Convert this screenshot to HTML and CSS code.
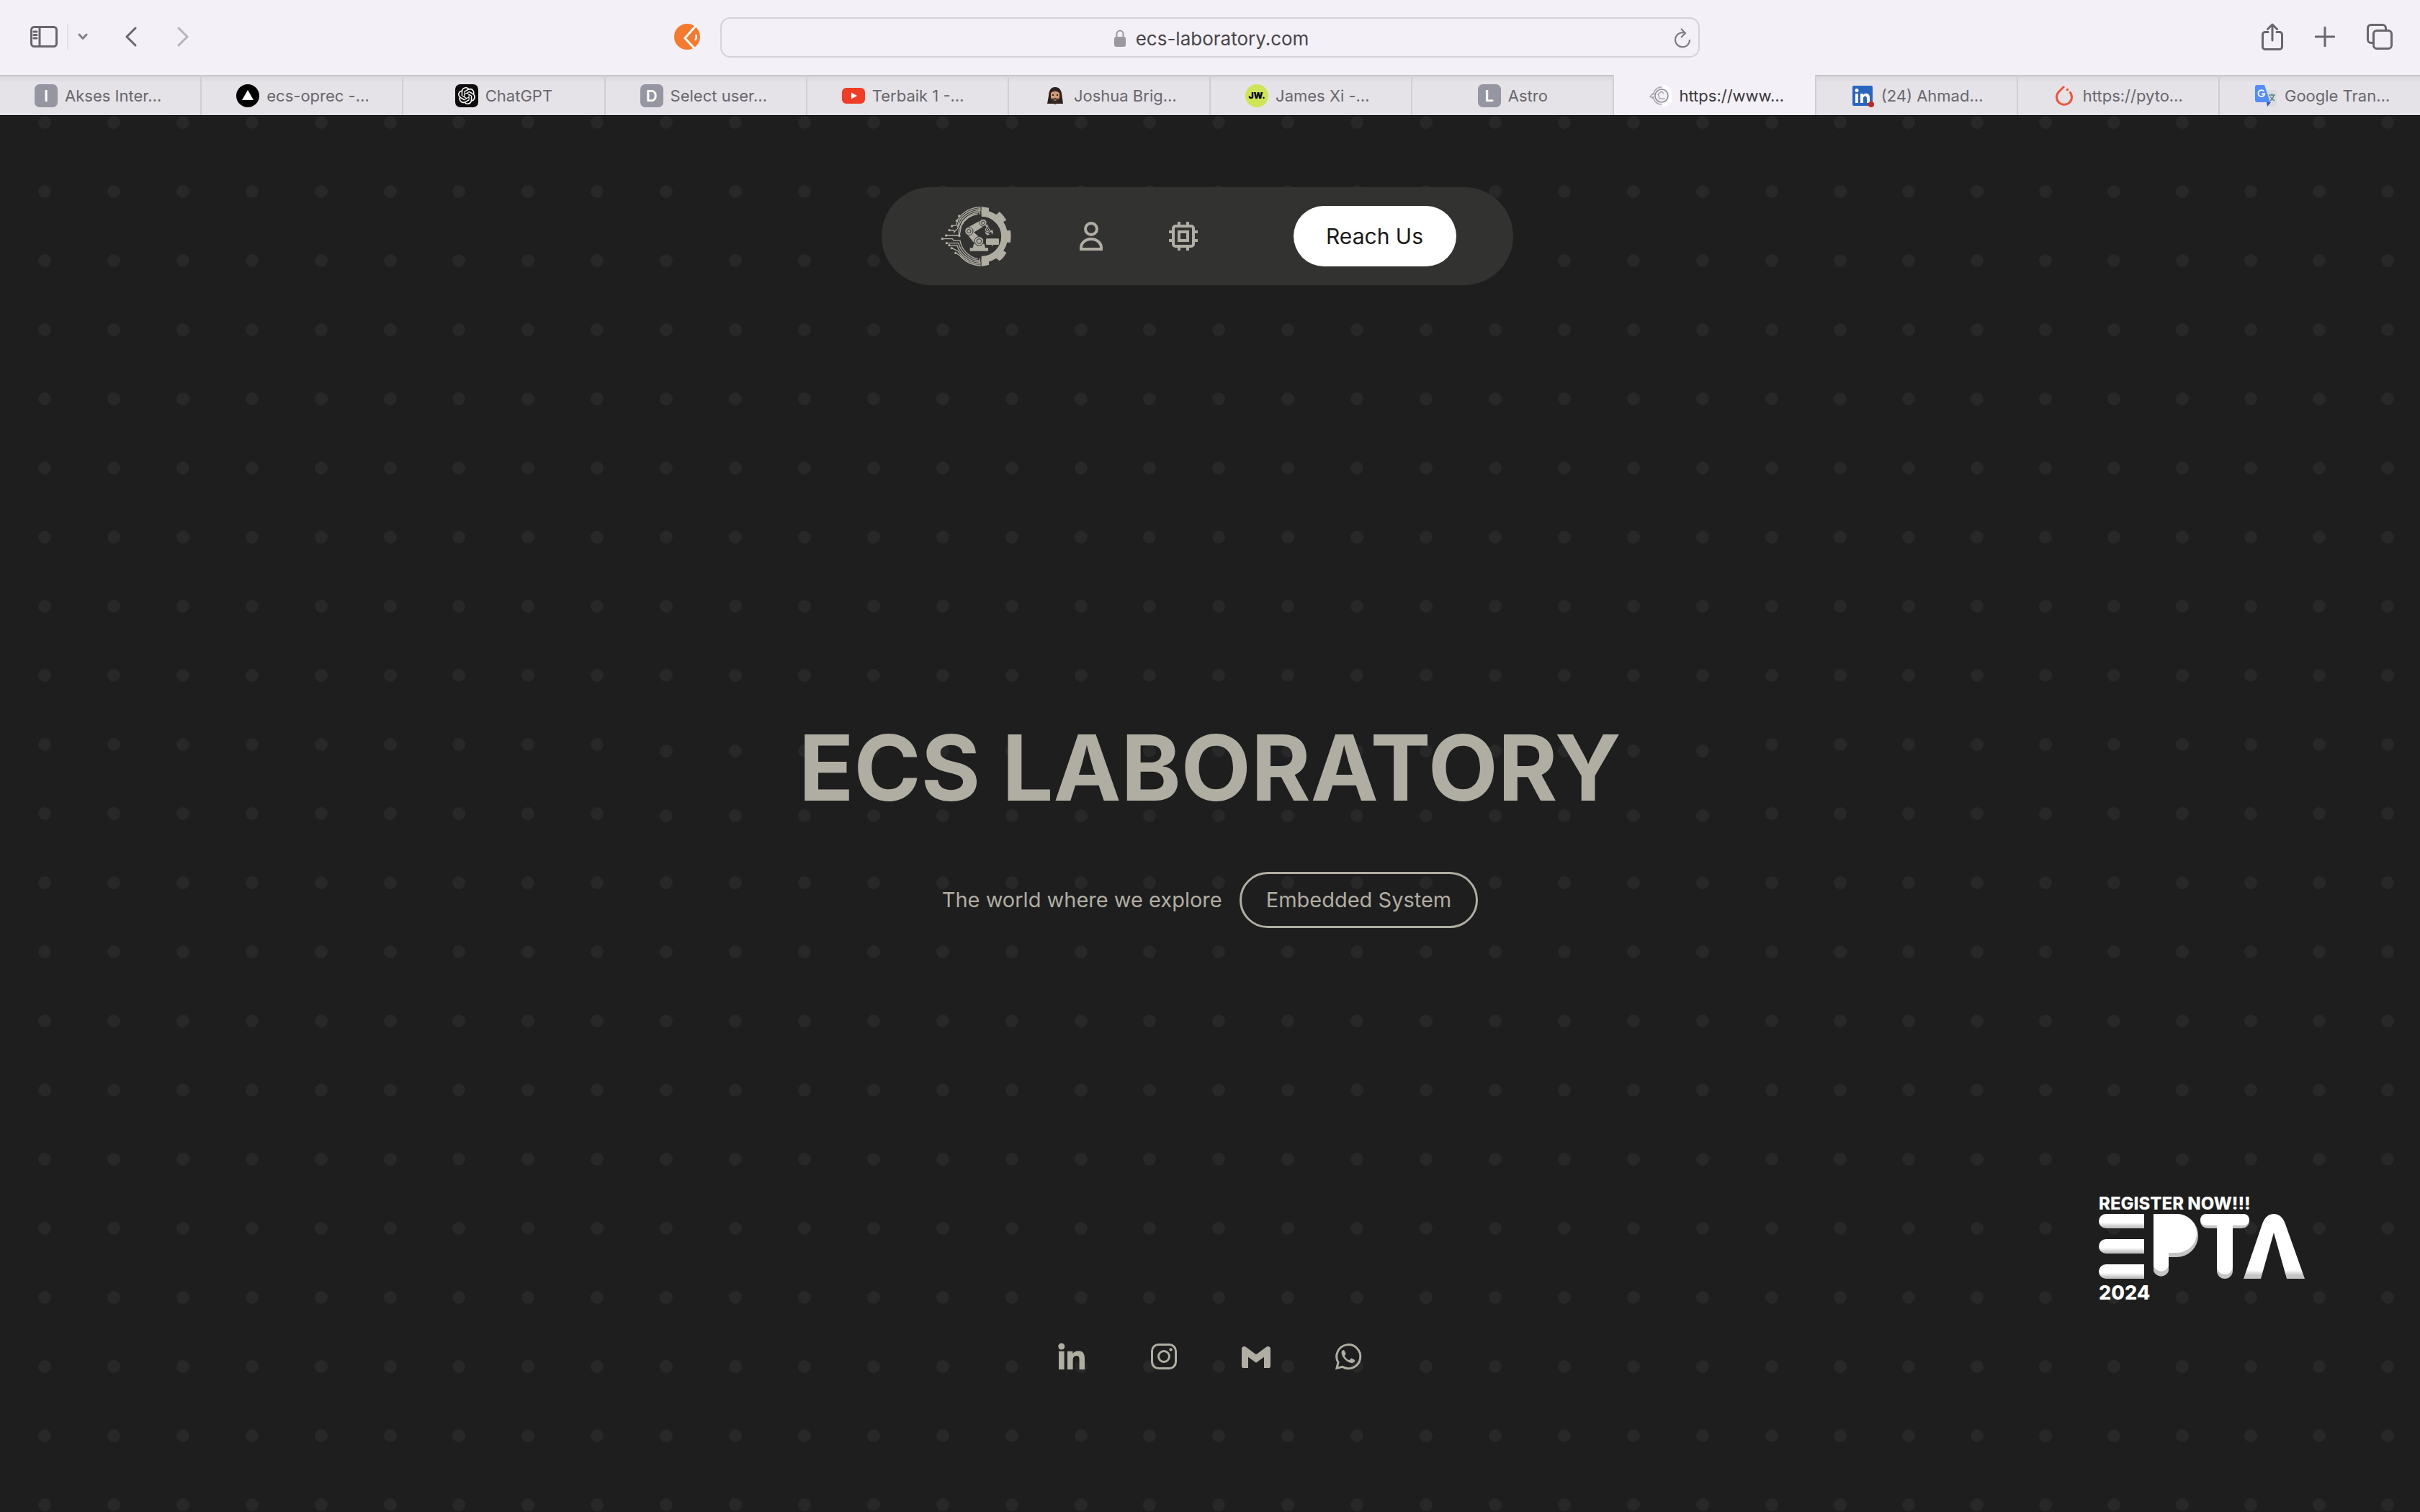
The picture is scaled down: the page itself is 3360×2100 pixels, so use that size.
FILE: index.html
```html
<!DOCTYPE html>
<html lang="en">
<head>
<meta charset="utf-8">
<meta name="viewport" content="width=device-width, initial-scale=1">
<title>ECS Laboratory</title>
<link rel="stylesheet" href="styles.css">
</head>
<body>
<div class="browser">
  <div class="toolbar">
    <div class="tools tools-left">
      <button class="tool" aria-label="Sidebar"><svg width="38" height="30" viewBox="0 0 38 30" class="line"><rect x="1.5" y="1.5" width="35" height="27" rx="4"/><path d="M13 1.5v27M5 8h4M5 12.500h4M5 17h4"/></svg></button>
      <span class="divider"></span>
      <button class="tool tool-menu" aria-label="Tab groups"><svg width="14" height="10" viewBox="0 0 14 10" class="line soft"><path d="M2 2l5 5.500L12 2"/></svg></button>
      <button class="tool tool-back" aria-label="Back"><svg width="16" height="28" viewBox="0 0 16 28" class="line"><path d="M14 2L2 14l12 12"/></svg></button>
      <button class="tool tool-forward" aria-label="Forward"><svg width="16" height="28" viewBox="0 0 16 28" class="line faint"><path d="M2 2l12 12L2 26"/></svg></button>
      <button class="tool tool-extension" aria-label="Extension"><svg width="36" height="36" viewBox="0 0 36 36"><circle cx="18" cy="18" r="18" fill="#f47a30"/><path d="M30 3L15 20l13 14" fill="none" stroke="#fff" stroke-width="3"/><path d="M30 15q2 4-1 8" fill="none" stroke="#fff" stroke-width="2.500"/></svg></button>
    </div>
    <div class="address">
      <svg width="16" height="24" viewBox="0 0 16 24"><rect y="10" width="16" height="14" rx="3" fill="#9b999e"/><path d="M3.500 11V6.500a4.500 5 0 0 1 9 0V11" fill="none" stroke="#9b999e" stroke-width="2"/></svg>
      <span>ecs-laboratory.com</span>
      <button class="tool reload" aria-label="Reload"><svg width="24" height="28" viewBox="0 0 24 28" fill="none" stroke="#7b797e" stroke-width="2"><path d="M14 6.500A10 10 0 1 0 22 16M10 1l6 6-6 6"/></svg></button>
    </div>
    <div class="tools tools-right">
      <button class="tool" aria-label="Share"><svg width="30" height="38" viewBox="0 0 30 38" class="line"><path d="M9 12.500H5a3.500 3.500 0 0 0-3.500 3.500v17A3.500 3.500 0 0 0 5 36.500h20a3.500 3.500 0 0 0 3.500-3.500V16a3.500 3.500 0 0 0-3.500-3.500h-4M15 24V2M8.500 8.500L15 2l6.500 6.500"/></svg></button>
      <button class="tool" aria-label="New tab"><svg width="28" height="28" viewBox="0 0 28 28" class="line"><path d="M14 1v26M1 14h26"/></svg></button>
      <button class="tool" aria-label="Tab overview"><svg width="36" height="36" viewBox="0 0 36 36" class="line"><path d="M9 26.500H6A4.500 4.500 0 0 1 1.500 22V6A4.500 4.500 0 0 1 6 1.500h16A4.500 4.500 0 0 1 26.500 6v3"/><rect x="9.500" y="9.500" width="25" height="25" rx="4.500"/></svg></button>
    </div>
  </div>
  <nav class="tabs" aria-label="Tabs">
    <a class="tab" href="#"><span class="letter">I</span><span class="title cut">Akses Inter…</span></a>
    <a class="tab" href="#"><svg class="fav" viewBox="0 0 32 32"><circle cx="16" cy="16" r="16"/><path d="M16 8l8 14H8z" fill="#fff"/></svg><span class="title cut">ecs-oprec -…</span></a>
    <a class="tab" href="#"><svg class="fav" viewBox="0 0 32 32"><rect width="32" height="32" rx="7" fill="#0d0d0d"/><path transform="translate(4 4)" fill="#fff" d="M22.2819 9.8211a5.9847 5.9847 0 0 0-.5157-4.9108 6.0462 6.0462 0 0 0-6.5098-2.9A6.0651 6.0651 0 0 0 4.9807 4.1818a5.9847 5.9847 0 0 0-3.9977 2.9 6.0462 6.0462 0 0 0 .7427 7.0966 5.98 5.98 0 0 0 .511 4.9107 6.051 6.051 0 0 0 6.5146 2.9001A5.9847 5.9847 0 0 0 13.2599 24a6.0557 6.0557 0 0 0 5.7718-4.2058 5.9894 5.9894 0 0 0 3.9977-2.9001 6.0557 6.0557 0 0 0-.7475-7.0729zm-9.022 12.6081a4.4755 4.4755 0 0 1-2.8764-1.0408l.1419-.0804 4.7783-2.7582a.7948.7948 0 0 0 .3927-.6813v-6.7369l2.02 1.1686a.071.071 0 0 1 .038.052v5.5826a4.504 4.504 0 0 1-4.4945 4.4944zm-9.6607-4.1254a4.4708 4.4708 0 0 1-.5346-3.0137l.142.0852 4.783 2.7582a.7712.7712 0 0 0 .7806 0l5.8428-3.3685v2.3324a.0804.0804 0 0 1-.0332.0615L9.74 19.9502a4.4992 4.4992 0 0 1-6.1408-1.6464zM2.3408 7.8956a4.485 4.485 0 0 1 2.3655-1.9728V11.6a.7664.7664 0 0 0 .3879.6765l5.8144 3.3543-2.0201 1.1685a.0757.0757 0 0 1-.071 0l-4.8303-2.7865A4.504 4.504 0 0 1 2.3408 7.872zm16.5963 3.8558L13.1038 8.364 15.1192 7.2a.0757.0757 0 0 1 .071 0l4.8303 2.7913a4.4944 4.4944 0 0 1-.6765 8.1042v-5.6772a.79.79 0 0 0-.407-.667zm2.0107-3.0231l-.142-.0852-4.7735-2.7818a.7759.7759 0 0 0-.7854 0L9.409 9.2297V6.8974a.0662.0662 0 0 1 .0284-.0615l4.8303-2.7866a4.4992 4.4992 0 0 1 6.6802 4.66zM8.3065 12.863l-2.02-1.1638a.0804.0804 0 0 1-.038-.0567V6.0742a4.4992 4.4992 0 0 1 7.3757-3.4537l-.142.0805L8.704 5.459a.7948.7948 0 0 0-.3927.6813zm1.0976-2.3654l2.602-1.4998 2.6069 1.4998v2.9994l-2.5974 1.4997-2.6067-1.4997Z"/></svg><span class="title">ChatGPT</span></a>
    <a class="tab" href="#"><span class="letter">D</span><span class="title cut">Select user…</span></a>
    <a class="tab" href="#"><svg class="fav" viewBox="0 0 32 32"><rect y="5" width="32" height="22" rx="6" fill="#f03d25"/><path d="M13 11.500l8 4.500-8 4.500z" fill="#fff"/></svg><span class="title cut">Terbaik 1 -…</span></a>
    <a class="tab" href="#"><svg class="fav" viewBox="0 0 32 32"><path d="M16 4c-7 0-8.500 6-9 12L5 27h22l-1.500-11C25 10 23 4 16 4z" fill="#2b211d"/><path d="M10 12q6-5 12 0v8q-2 7-6 7t-6-7z" fill="#d29a78"/><path d="M10 19q2 2 6 0 4 2 6 0-.5 8-6 9-5.500-1-6-9z" fill="#3a2a22"/><path d="M13.500 21.500q2.500 2 5 0z" fill="#e8d8cf"/><circle cx="13" cy="15" r="1"/><circle cx="19" cy="15" r="1"/></svg><span class="title cut">Joshua Brig…</span></a>
    <a class="tab" href="#"><span class="letter jw">JW.</span><span class="title cut">James Xi -…</span></a>
    <a class="tab" href="#"><span class="letter">L</span><span class="title">Astro</span></a>
    <a class="tab active" href="#" aria-current="page"><svg class="fav" viewBox="0 0 32 32" fill="none" stroke="#aaa8ad" stroke-width="1.500"><path d="M19 3a13 13 0 0 1 0 26" stroke="#fff" stroke-width="5"/><circle cx="18" cy="16" r="9" stroke="#8f8d92"/><path d="M18 4A12 12 0 0 0 7 12L2 17l5 3a12 12 0 0 0 11 8M5 14h4M4 18h4M14 20h9M15 19l-2-5 5-4 3 3"/></svg><span class="title cut">https://www…</span></a>
    <a class="tab" href="#"><svg class="fav" viewBox="0 0 32 32"><rect x="2" y="2" width="28" height="28" rx="2" fill="#2866bf"/><g fill="#fff"><circle cx="8" cy="8.500" r="2.500"/><path d="M6 13h4v13H6zM13 13h4v2c2-3.500 9-3 9 3.500V26h-4v-6.500c0-4-5-4-5 0V26h-4z"/></g><circle cx="28" cy="28" r="4" fill="#c5281c"/></svg><span class="title cut">(24) Ahmad…</span></a>
    <a class="tab" href="#"><svg class="fav" viewBox="0 0 32 32"><path d="M16 3L8.500 10.500a10.500 10.500 0 1 0 15 0" fill="none" stroke="#ea573a" stroke-width="3"/><circle cx="20.500" cy="7.500" r="1.800" fill="#ea573a"/></svg><span class="title cut">https://pyto…</span></a>
    <a class="tab" href="#"><svg class="fav" viewBox="0 0 32 32"><path d="M12 8h17a2 2 0 0 1 2 2v19a2 2 0 0 1-2 2H18z" fill="#dcdcdc"/><path d="M17 25h6l-5 6z" fill="#3757c6"/><path d="M4 1h10l8 24H4a3 3 0 0 1-3-3V4a3 3 0 0 1 3-3z" fill="#548df5"/><path d="M13.500 10a4.500 4.500 0 1 0 .8 3.500H10" fill="none" stroke="#fff" stroke-width="1.800"/><path d="M20 15h9M24.500 13v2M27 15q-1 5-5 8M22 17q2 4 6 6" fill="none" stroke="#60838e" stroke-width="1.500"/></svg><span class="title cut">Google Tran…</span></a>
  </nav>
</div>

<div class="page">
  <svg class="dots" viewBox="0 0 3360 1940" preserveAspectRatio="xMinYMin slice" aria-hidden="true"></svg>
  <header class="menu">
    <a href="#" aria-label="Home"><svg class="logo" viewBox="48 45 294 258">
      <g fill="none" stroke="#b0ada3" stroke-width="4">
        <path d="M215 53A122 122 0 0 0 120 103L112 130H95M215 60A115 115 0 0 0 127 105L118 135M215 67A108 108 0 0 0 134 108L118 143 104 158V150H84M208 74A101 101 0 0 0 140 113L124 150V171H71M203 81A94 94 0 0 0 134 131L126 173M211 56V84"/>
        <path d="M215 297A122 122 0 0 1 128 255L111 243M215 290A115 115 0 0 1 120 236L94 223M215 283A108 108 0 0 1 116 212H84M208 276A101 101 0 0 1 122 203H72M203 269A94 94 0 0 1 129 193H103L97 185H55M211 294V266"/>
      </g>
      <g fill="#b0ada3"><circle cx="95" cy="132" r="5"/><circle cx="84" cy="149" r="5"/><circle cx="71" cy="171" r="5"/><circle cx="55" cy="185" r="5"/><circle cx="73" cy="203" r="5"/><circle cx="84" cy="212" r="5"/><circle cx="94" cy="224" r="5"/><circle cx="110" cy="244" r="5"/><circle cx="115" cy="110" r="5"/><circle cx="125" cy="90" r="5"/><circle cx="126" cy="173" r="5"/></g>
      <path d="M218 79a96 96 0 0 1 0 192" fill="none" stroke="#b0ada3" stroke-width="27"/>
      <g fill="#b0ada3"><path d="M218 51l31 5v24h-31zM218 300l31-6v-24h-31zM319 150h20l2 24-2 26h-20zM274 90l19-18q18 15 29 35l-24 14zM274 262l19 15q18-12 29-35l-24-14z"/>
        <path d="M159 139l62-34 12 25-58 35zM158 166l22-14 34 30-22 26zM186 206h44l4 18h-52zM170 223h76v13h-76zM241 184h46q4 0 4 4v18q0 4-4 4h-20l-4 6-3-6h-19q-4 0-4-4v-18q0-4 4-4zM230 126l12 14 6-4-10-16zM234 152l14 0 16-4 3 11-6 9-2-12-13 5 6 6-9 3-9-8z"/></g>
      <g fill="#b0ada3" stroke="#323230" stroke-width="3"><circle cx="166" cy="153" r="17"/><circle cx="225" cy="118" r="15"/><circle cx="243" cy="147" r="11"/><circle cx="208" cy="195" r="19"/><circle cx="166" cy="153" r="8"/><circle cx="225" cy="118" r="7"/><circle cx="243" cy="147" r="5"/><circle cx="208" cy="195" r="10"/></g>
    </svg></a>
    <a class="menu-user" href="#" aria-label="Members"><svg class="icon" viewBox="0 0 24 24"><circle cx="12" cy="7" r="4"/><path d="M5 21v-1a7 6 0 0 1 14 0v1z"/></svg></a>
    <a class="menu-chip" href="#" aria-label="Projects"><svg class="icon" viewBox="0 0 24 24"><rect x="5" y="5" width="14" height="14" rx="1.500"/><rect x="9" y="9" width="6" height="6"/><path d="M9 2v2M15 2v2M9 20v2M15 20v2M2 9h2M2 15h2M20 9h2M20 15h2"/></svg></a>
    <button class="reach">Reach Us</button>
  </header>

  <main class="hero">
    <h1>ECS LABORATORY</h1>
    <p class="lead">The world where we explore <span class="topic">Embedded System</span></p>
  </main>

  <footer class="social">
    <a href="#" aria-label="LinkedIn"><svg class="glyph" viewBox="0 0 24 24"><circle cx="4.900" cy="5" r="2.250"/><path d="M3 8.400h3.800V21H3zM9 8.400h3.700v1.700c.6-1.100 2-2 3.800-2 3.700 0 4.500 2.400 4.500 5.700V21h-3.700v-6.500c0-1.600-.1-3-1.900-3s-2.600 1.400-2.600 3V21H9z"/></svg></a>
    <a href="#" aria-label="Instagram"><svg class="glyph thin" viewBox="0 0 24 24"><rect x="3.750" y="3.750" width="16.500" height="16.500" rx="4.500"/><circle cx="12" cy="12" r="3.750"/><circle class="solid" cx="16.800" cy="7.200" r="1.100"/></svg></a>
    <a href="#" aria-label="Email"><svg class="glyph" viewBox="0 0 24 24"><path d="M2 18.600V6.700c0-1.500 1.600-2.200 2.700-1.400L12 10.600l7.300-5.300c1.100-.8 2.700-.1 2.700 1.400v11.900a1.400 1.400 0 0 1-1.400 1.400h-3.100v-7.600L12 16.400l-5.500-4V20H3.400A1.400 1.400 0 0 1 2 18.600z"/></svg></a>
    <a href="#" aria-label="WhatsApp"><svg class="glyph thin" viewBox="0 0 24 24"><path d="M4 20.100l1-3.900a8.250 8.250 0 1 1 3 3z"/><path class="solid" d="M9.300 7.900c-.3-.4-.6-.4-1-.3-1 .4-1.200 1.500-.9 2.600.8 2.900 3.300 5.400 6.300 6.200 1.200.3 2.500-.1 2.800-1.300.1-.4 0-.6-.3-.8l-1.700-.9c-.4-.2-.6-.1-.9.200l-.5.700c-.2.200-.4.300-.7.200-1.300-.6-2.200-1.500-2.900-2.800-.1-.3 0-.4.200-.6.500-.5.700-.8.500-1.300z"/></svg></a>
  </footer>

  <a class="event" href="#">
    <span class="event-top">REGISTER NOW!!!</span>
    <svg class="event-logo" viewBox="0 0 286 90" role="img" aria-label="EPTA">
      <defs><linearGradient id="bar" x1="0" y1="0" x2="0" y2="1"><stop offset=".6" stop-color="#fff"/><stop offset=".9" stop-color="#c4c4c4"/></linearGradient><linearGradient id="foot" gradientUnits="userSpaceOnUse" x1="0" y1="78" x2="0" y2="90"><stop offset="0" stop-color="#fff"/><stop offset=".6" stop-color="#c4c4c4"/></linearGradient></defs>
      <g fill="url(#bar)"><path d="M10 0h53v20H10a10 10 0 0 1 0-20z"/><path d="M10 35h53v20H10a10 10 0 0 1 0-20z"/><path d="M10 70h53v20H10a10 10 0 0 1 0-20z"/></g>
      <g fill="#c4c4c4"><path d="M76 0h32a30 30 0 0 1 0 60H97v19a11 11 0 0 1-21 0z"/><rect x="141" y="0" width="68" height="20" rx="10"/><rect x="164" y="8" width="22" height="82" rx="11"/></g>
      <g fill="#fff"><path d="M76 0h32a28 27 0 0 1 0 54H97v18a11 11 0 0 1-21 0z"/><rect x="141" y="0" width="68" height="16" rx="8"/><rect x="164" y="4" width="22" height="80" rx="11"/></g>
      <path d="M201 90l26-76q5-14 16-14t16 14l27 76h-25L243 26 225 90z" fill="url(#foot)"/>
    </svg>
    <span class="event-year">2024</span>
  </a>
</div>
<script src="dots.js"></script>
</body>
</html>
```
FILE: dots.js
```js
// Dotted backdrop. The three rows nearest the title bend down slightly.
const field = document.querySelector('.dots');
const columns = Array.from({ length: 27 }, (_, i) => Math.round(62 + i * 95.9));
for (let i = 1; i <= 8; i++) columns.push(Math.round(2555 + i * 95));
for (let row = 0; row < 21; row++) {
  columns.forEach((x, col) => {
    const near = col > 8 && col < 25;
    const bend = near && row === 9 ? 9 : near && row === 10 ? 3 : 0;
    const dot = document.createElementNS('http://www.w3.org/2000/svg', 'circle');
    dot.setAttribute('cx', x);
    dot.setAttribute('cy', 9 + row * 96 + bend);
    dot.setAttribute('r', 9);
    field.append(dot);
  });
}
```
FILE: styles.css
```css
* { box-sizing: border-box; }

body {
  margin: 0;
  min-height: 100vh;
  display: flex;
  flex-direction: column;
  background: #1e1e1e;
  color: #b0ada3;
  font-family: Inter, "Liberation Sans", sans-serif;
}

a { color: inherit; text-decoration: none; }
button { font: inherit; border: 0; padding: 0; background: none; }
svg { display: block; }

/* Browser bar */
.browser { background: #f3f0f7; border-bottom: 1px solid #000; }

.toolbar {
  display: grid;
  grid-template-columns: 1fr minmax(0, 1360px) 1fr;
  align-items: center;
  height: 104px;
}

.tools { display: flex; align-items: center; height: 100%; padding-bottom: 3px; }
.tools-left { padding-left: 42px; padding-right: 28px; }
.tools-right { justify-content: flex-end; gap: 44px; padding-right: 38px; }
.divider { width: 2px; height: 36px; margin: 0 13px; background: #e4e1e8; }
.tool-back { margin-left: 52px; }
.tool-forward { margin-left: 56px; }
.tool-extension { margin-left: auto; }

.line { fill: none; stroke: #69666c; stroke-width: 3; stroke-linecap: round; stroke-linejoin: round; }
.soft { stroke: #858289; }
.faint { stroke: #b7b4bb; }

.address {
  position: relative;
  display: flex;
  align-items: center;
  justify-content: center;
  gap: 14px;
  height: 56px;
  padding: 2px 0 0 4px;
  border: 2px solid #d5d2d9;
  border-radius: 14px;
  color: #47454a;
  font-size: 26px;
}
.reload { position: absolute; right: 10px; }

.tabs { display: flex; height: 56px; }
.tab {
  flex: 1;
  min-width: 0;
  display: flex;
  align-items: center;
  justify-content: center;
  gap: 10px;
  padding-top: 2px;
  border-left: 2px solid #d0cdd3;
  background: linear-gradient(#c2bfc5 0, #c2bfc5 1px, #d9d6dc 2px, #e5e3e8 10px);
  color: #69676c;
  font-size: 22px;
  line-height: 28px;
  white-space: nowrap;
}
.tab:first-child { border-left: 0; }
.active { background: #f3f0f7; color: #3b393e; }
.cut { width: 140px; }
.fav, .letter { flex: none; width: 32px; height: 32px; }
.letter {
  border-radius: 7px;
  background: #9596a1;
  color: #fff;
  font-weight: 600;
  line-height: 32px;
  text-align: center;
}
.jw { border-radius: 16px; background: #cde557; color: #000; font-size: 12px; font-weight: 900; }

/* Landing page */
.page {
  position: relative;
  flex: 1;
  display: flex;
  flex-direction: column;
  align-items: center;
  padding: 99px 0 192px;
}
.dots { position: absolute; inset: 0; z-index: -1; width: 100%; height: 100%; fill: #282828; }

.menu {
  display: flex;
  align-items: center;
  height: 136px;
  margin-right: 36px;
  padding: 0 79px 0 82px;
  border-radius: 68px;
  background: #323230;
}
.logo { width: 98px; height: 86px; }
.icon { width: 48px; height: 48px; fill: none; stroke: #b0ada3; stroke-width: 2; }
.menu-user { margin-left: 87px; }
.menu-chip { margin-left: 80px; }
.reach {
  width: 226px;
  height: 84px;
  margin-left: 129px;
  border-radius: 42px;
  background: #fff;
  color: #1a1a1a;
  font-size: 30px;
}

.hero {
  flex: 1;
  display: flex;
  flex-direction: column;
  align-items: center;
  justify-content: center;
  gap: 81px;
  padding-top: 34px;
}
h1 { margin: 0; font-size: 126px; line-height: 128px; font-weight: 700; text-align: center; }
.lead { display: flex; align-items: center; gap: 24px; margin: 0; font-size: 29px; line-height: 40px; }
.topic { padding: 16px 34px; border: 3px solid #b0ada3; border-radius: 39px; }

.social { display: flex; gap: 80px; }
.glyph { width: 48px; height: 48px; fill: #b0ada3; }
.thin { fill: none; stroke: #b0ada3; stroke-width: 1.5px; }
.solid { fill: #b0ada3; stroke: none; }

.event {
  position: absolute;
  right: 160px;
  bottom: 284px;
  display: flex;
  flex-direction: column;
  color: #fff;
  font-weight: 800;
}
.event-top { font-size: 24px; line-height: 28px; }
.event-logo { width: 286px; height: 90px; }
.event-year { font-size: 27px; line-height: 40px; }
```
